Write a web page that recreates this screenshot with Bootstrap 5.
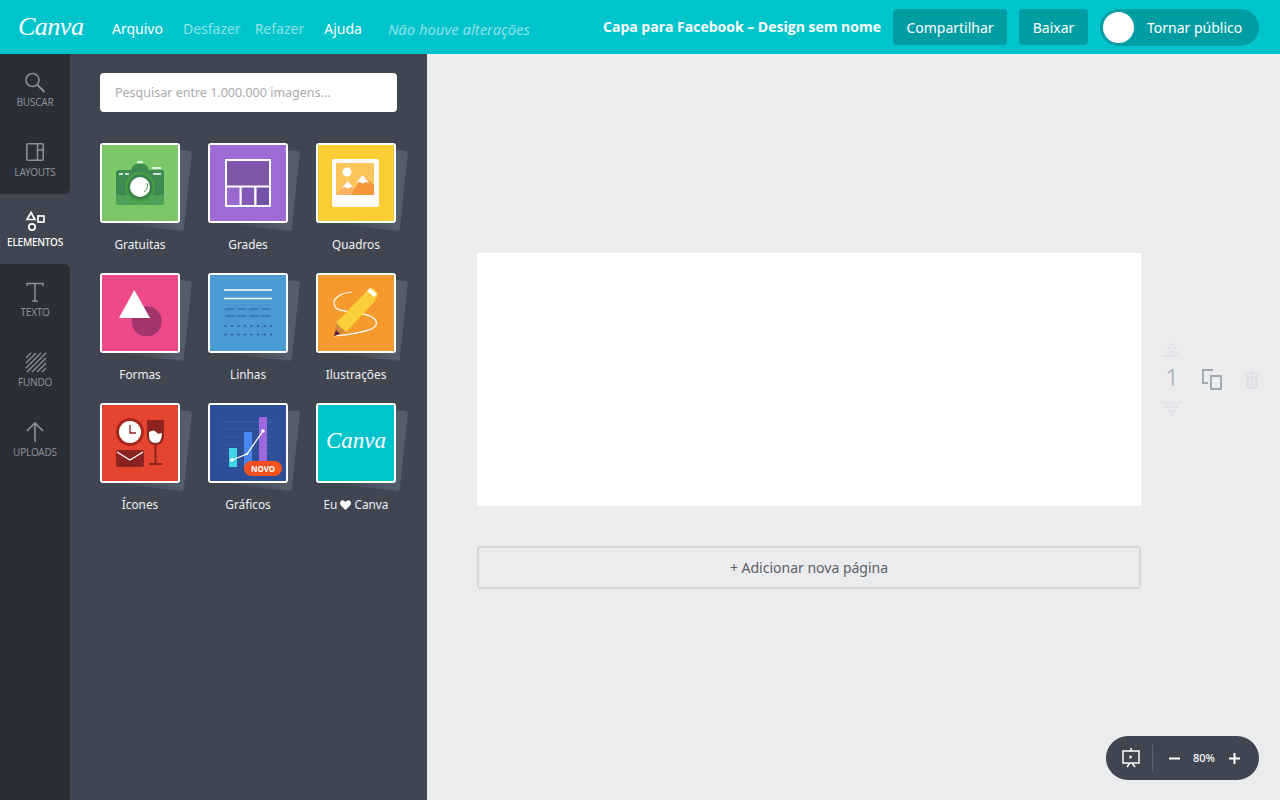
<!DOCTYPE html>
<html lang="pt-BR">
<head>
    <meta charset="UTF-8">
    <meta name="viewport" content="width=device-width, initial-scale=1.0">
    <title>Capa para Facebook - Canva</title>
    <link rel="stylesheet" href="https://cdn.jsdelivr.net/npm/bootstrap@5.3.0/dist/css/bootstrap.min.css">
    <style>
        html, body { height: 100%; overflow: hidden; }
        body { font-family: "Noto Sans", "Open Sans", sans-serif; background: #ebecee; }

        .topbar { height: 54px; background: #00c4cc; color: #fff; }
        .brand { width: 112px; padding-left: 18px; font-family: "Liberation Serif", serif; font-style: italic; font-size: 26px; line-height: 50px; letter-spacing: -.5px; }
        .menu-item { font-size: 14px; line-height: 20px; margin-top: 4px; color: #fff; }
        .menu-off { color: #8fe3e6; margin-left: 20px; }
        .menu-redo { margin-left: 14px; }
        .menu-help { margin-left: 20px; }
        .menu-note { font-style: italic; font-size: 14.8px; color: #8fe3e6; margin-left: 26px; }
        .doc-title { font-family: "Open Sans", sans-serif; font-weight: 700; font-size: 14px; margin: -1px 12px 0 0; }
        .bar-btn { height: 36px; background: #009da3; color: #fff; border: 0; border-radius: 4px; font-size: 14px; line-height: 20px; padding: 1px 0 0; }
        .bar-btn:hover { background: #009da3; color: #fff; }
        .share-btn { width: 114px; }
        .dl-btn { width: 69px; margin: 0 12px; }
        .public-toggle { width: 159px; height: 37px; background: #009da3; border-radius: 19px; padding-left: 3px; font-size: 14px; margin-right: 21px; }
        .toggle-knob { width: 31px; height: 31px; background: #fff; border-radius: 50%; margin-right: 13px; }

        .workspace { height: 746px; }
        .side-rail { width: 70px; background: #3f4652; }
        .rail-group { background: #2a2e36; }
        .rail-top { border-bottom-right-radius: 6px; }
        .rail-rest { border-top-right-radius: 6px; }
        .rail-item { height: 70px; padding-top: 16px; color: #8b8f96; font-size: 10px; line-height: 14px; letter-spacing: -.2px; }
        .rail-item svg { display: block; height: 24px; margin-bottom: 1px; }
        .rail-active { color: #fff; }

        .side-panel { width: 357px; background: #3f4652; padding: 19px 30px 0; }
        .search-box { height: 39px; width: 297px; font-size: 12.5px; border: 0; padding-left: 15px; border-radius: 4px; font-family: "Noto Sans", sans-serif; }
        .search-box::placeholder { color: #aaa; }
        .tile-grid { display: grid; grid-template-columns: repeat(3, 80px); column-gap: 28px; grid-auto-rows: 130px; margin-top: 31px; }
        .tile-cell { color: #f0f1f3; font-size: 11.8px; text-align: center; }
        .tile-frame { position: relative; width: 80px; height: 80px; margin-bottom: 13px; }
        .tile-frame::before { content: ""; position: absolute; left: 8px; top: 4px; width: 80px; height: 80px; border-radius: 3px; background: linear-gradient(45deg, #3f4652 12%, #565d6a 50%); transform: rotate(6deg); }
        .tile-face { position: relative; width: 80px; height: 80px; border: 2px solid #fff; border-radius: 3px; overflow: hidden; }
        .tile-face svg { display: block; width: 76px; height: 76px; }
        .tile-label { white-space: nowrap; margin: 0 -10px; line-height: 17px; }
        .tile-label svg { vertical-align: -1px; }
        .face-teal { background: #00c4cc; }
        .face-logo { font-family: "Liberation Serif", serif; font-style: italic; font-size: 23px; line-height: 72px; color: #fff; }
        .novo-tag { position: absolute; left: 34px; top: 56px; width: 38px; height: 15px; background: #f4511e; border-radius: 8px; color: #fff; font-size: 8px; font-weight: 700; line-height: 15px; }

        .stage { padding: 199px 0 0 50px; }
        .design-page { width: 664px; height: 253px; background: #fff; }
        .page-tools { width: 139px; height: 253px; padding-left: 21px; }
        .num-col { width: 20px; height: 73px; margin-top: -1px; }
        .page-num { font-size: 24px; font-weight: 300; line-height: 30px; margin: 5px 0 10px; text-align: center; color: #a5a8ad; }
        .num-col svg { display: block; }
        .copy-icon { margin: 0 23px 0 20px; }
        .add-page { width: 664px; height: 43px; margin-top: 40px; border: 2px solid #d5d7db; border-radius: 4px; font-size: 14px; color: #5b5f66; background: transparent; }
        .add-page:hover { color: #5b5f66; background: transparent; border-color: #d5d7db; }
        .zoom-pill { position: absolute; right: 21px; bottom: 20px; width: 153px; height: 44px; background: #3f4652; border-radius: 22px; color: #fff; font-size: 11px; font-weight: 500; padding-left: 16px; }
        .zoom-sep { width: 1px; height: 26px; background: #5d636e; margin: 0 16px 0 12px; }
        .zoom-val { margin: 0 14px 0 13px; }
    </style>
</head>
<body>
    <!-- top bar -->
    <div class="topbar d-flex align-items-center">
        <div class="brand">Canva</div>
        <div class="menu-item">Arquivo</div>
        <div class="menu-item menu-off">Desfazer</div>
        <div class="menu-item menu-off menu-redo">Refazer</div>
        <div class="menu-item menu-help">Ajuda</div>
        <div class="menu-item menu-note">Não houve alterações</div>
        <div class="doc-title ms-auto">Capa para Facebook – Design sem nome</div>
        <button class="btn bar-btn share-btn">Compartilhar</button>
        <button class="btn bar-btn dl-btn">Baixar</button>
        <div class="public-toggle d-flex align-items-center">
            <div class="toggle-knob"></div>
            <span>Tornar público</span>
        </div>
    </div>

    <div class="workspace d-flex position-relative">
        <!-- left rail -->
        <div class="side-rail d-flex flex-column">
            <div class="rail-group rail-top">
                <div class="rail-item d-flex flex-column align-items-center">
                    <svg width="24" height="24" viewBox="0 0 24 24" fill="none" stroke="#8b8f96" stroke-width="1.6"><circle cx="9.5" cy="10" r="6.5"/><path d="M14.5 15l7 7" stroke-width="2"/></svg>
                    <span>BUSCAR</span>
                </div>
                <div class="rail-item d-flex flex-column align-items-center">
                    <svg width="24" height="24" viewBox="0 0 24 24" fill="none" stroke="#8b8f96" stroke-width="1.6"><rect x="3.8" y="3.8" width="16.4" height="16.4" rx="1"/><path d="M14.5 4v16M14.5 10h6"/></svg>
                    <span>LAYOUTS</span>
                </div>
            </div>
            <div class="rail-item rail-active d-flex flex-column align-items-center">
                <svg width="24" height="24" viewBox="0 0 24 24" fill="none" stroke="#fff" stroke-width="1.7"><path d="M8 2.5l4 7H4z"/><rect x="15" y="6" width="6" height="6"/><circle cx="9" cy="17" r="3.2"/></svg>
                <span class="fw-medium">ELEMENTOS</span>
            </div>
            <div class="rail-group rail-rest flex-grow-1">
                <div class="rail-item d-flex flex-column align-items-center">
                    <svg width="24" height="24" viewBox="0 0 24 24" fill="none" stroke="#8b8f96" stroke-width="1.5"><path d="M4 6V3.5h16V6M12 3.5V21M9 21h6"/></svg>
                    <span>TEXTO</span>
                </div>
                <div class="rail-item d-flex flex-column align-items-center">
                    <svg width="24" height="24" viewBox="0 0 24 24" fill="none" stroke="#8b8f96" stroke-width="1.4"><path d="M3 8l5-5M3 13l10-10M3 18L18 3M4 22L23 3M9 22L23 8M14 22l9-9M19 22l4-4"/></svg>
                    <span>FUNDO</span>
                </div>
                <div class="rail-item d-flex flex-column align-items-center">
                    <svg width="24" height="24" viewBox="0 0 24 24" fill="none" stroke="#8b8f96" stroke-width="1.6"><path d="M12 22V3M4 11l8-8 8 8"/></svg>
                    <span>UPLOADS</span>
                </div>
            </div>
        </div>

        <!-- elements panel -->
        <div class="side-panel">
            <input class="form-control search-box" type="text" placeholder="Pesquisar entre 1.000.000 imagens...">
            <div class="tile-grid">
                <div class="tile-cell">
                    <div class="tile-frame"><div class="tile-face">
                        <svg viewBox="2 2 76 76">
                            <rect x="2" y="2" width="76" height="76" fill="#7cc768"/>
                            <rect x="16" y="27" width="48" height="35" rx="3" fill="#3d8a52"/>
                            <path d="M16 52h48v7a3 3 0 0 1-3 3H19a3 3 0 0 1-3-3z" fill="#4ea257"/>
                            <path d="M31 32q0-11 6-11h6q6 0 6 11z" fill="#3d8a52"/>
                            <path d="M19 31h4M25 31h4M52 25h9M37 19h6M53 31h8" stroke="#fff" stroke-width="1.3"/>
                            <circle cx="40" cy="44" r="15" fill="#4a9c46"/>
                            <circle cx="40" cy="44" r="12.5" fill="#37804c"/>
                            <circle cx="40" cy="44" r="10" fill="#fff"/>
                            <path d="M47 40a8 8 0 0 1-3 9" fill="none" stroke="#4a9c46" stroke-width="1"/>
                        </svg>
                    </div></div>
                    <div class="tile-label">Gratuitas</div>
                </div>
                <div class="tile-cell">
                    <div class="tile-frame"><div class="tile-face">
                        <svg viewBox="2 2 76 76">
                            <rect x="2" y="2" width="76" height="76" fill="#9d6ad6"/>
                            <rect x="17" y="16" width="46" height="48" rx="1" fill="#fff"/>
                            <rect x="19" y="18" width="42" height="24.5" fill="#7f56a9"/>
                            <rect x="19" y="44.5" width="12.5" height="17.5" fill="#9a69d0"/>
                            <rect x="33.7" y="44.5" width="12.5" height="17.5" fill="#8459b5"/>
                            <rect x="48.5" y="44.5" width="12.5" height="17.5" fill="#7552a8"/>
                        </svg>
                    </div></div>
                    <div class="tile-label">Grades</div>
                </div>
                <div class="tile-cell">
                    <div class="tile-frame"><div class="tile-face">
                        <svg viewBox="2 2 76 76">
                            <rect x="2" y="2" width="76" height="76" fill="#fbcd35"/>
                            <rect x="16" y="16" width="47" height="48" rx="2" fill="#fff"/>
                            <rect x="20" y="20" width="38" height="32" fill="#fcc55a"/>
                            <circle cx="31" cy="29" r="4.5" fill="#fff"/>
                            <path d="M20 52l11.7-14L46 52z" fill="#fdb163"/>
                            <path d="M35 52l11.700-19.500L58 42v10z" fill="#f6953a"/>
                            <path d="M31.700 38l-6 7 3-1 3 1.500 3-1.500 3 1zM46.700 32l-6.500 8 3.200-1 3.300 1.500 3.300-1.500 3.200 1z" fill="#fff"/>
                        </svg>
                    </div></div>
                    <div class="tile-label">Quadros</div>
                </div>
                <div class="tile-cell">
                    <div class="tile-frame"><div class="tile-face">
                        <svg viewBox="2 2 76 76">
                            <rect x="2" y="2" width="76" height="76" fill="#ee4a8b"/>
                            <circle cx="46.7" cy="48.3" r="15" fill="#a3356d"/>
                            <path d="M34.3 17L50 45H19z" fill="#fff"/>
                        </svg>
                    </div></div>
                    <div class="tile-label">Formas</div>
                </div>
                <div class="tile-cell">
                    <div class="tile-frame"><div class="tile-face">
                        <svg viewBox="2 2 76 76">
                            <rect x="2" y="2" width="76" height="76" fill="#4c9ad4"/>
                            <path d="M16 17h48M16 25.5h48" stroke="#fff" stroke-width="1.5"/>
                            <path d="M17 36h46M17 43h46" stroke="#3576a8" stroke-width="1.5" stroke-dasharray="9.500 2.500"/>
                            <path d="M17.5 53h47M17.5 61.5h47" stroke="#2a5a86" stroke-width="2.200" stroke-linecap="round" stroke-dasharray="0 6.500"/>
                        </svg>
                    </div></div>
                    <div class="tile-label">Linhas</div>
                </div>
                <div class="tile-cell">
                    <div class="tile-frame"><div class="tile-face">
                        <svg viewBox="2 2 76 76">
                            <rect x="2" y="2" width="76" height="76" fill="#f69a2e"/>
                            <path d="M36 19C22 20 14 28 20 35c6 6 36 3 40 13 3 8-11 12-42 15" fill="none" stroke="#fff" stroke-width="1.200"/>
                            <path d="M50 19l10 8-30 32-10-9z" fill="#fbcf3a"/>
                            <path d="M52 17q3-3 6-1l2 2q3 3 1 6l-2 2-9-7z" fill="#fbcf3a"/>
                            <path d="M51 18l3-3 7 6-3 3z" fill="#fff"/>
                            <path d="M20 50l10 9-12 4z" fill="#d48a3c"/>
                            <path d="M20 57l4 4-6 2z" fill="#5a2440"/>
                        </svg>
                    </div></div>
                    <div class="tile-label">Ilustrações</div>
                </div>
                <div class="tile-cell">
                    <div class="tile-frame"><div class="tile-face">
                        <svg viewBox="2 2 76 76">
                            <rect x="2" y="2" width="76" height="76" fill="#e5452f"/>
                            <circle cx="30" cy="29" r="14" fill="#a8281f"/>
                            <circle cx="30" cy="29" r="11" fill="#fff"/>
                            <path d="M30 22v8h6" fill="none" stroke="#8a221c" stroke-width="1.300"/>
                            <path d="M47 17h17v16q-1 9-8.500 9T47 33z" fill="#8b2421"/>
                            <path d="M49 29q5-3 7 0t6 1q0 10-6.500 10T49 33z" fill="#fff"/>
                            <path d="M54.500 41h2v19h-2zM49 60h13v2H49z" fill="#8b2421"/>
                            <rect x="16" y="47" width="28" height="17" rx="2" fill="#8b2421"/>
                            <path d="M17 49l13 8 13-8" fill="none" stroke="#fff" stroke-width="1.300"/>
                        </svg>
                    </div></div>
                    <div class="tile-label">Ícones</div>
                </div>
                <div class="tile-cell">
                    <div class="tile-frame"><div class="tile-face">
                        <svg viewBox="2 2 76 76">
                            <rect x="2" y="2" width="76" height="76" fill="#2c4f97"/>
                            <path d="M14 19h54M14 26h54M14 34h54M14 42h54M14 50h54M14 58h54" stroke="#43659f" stroke-width=".8"/>
                            <rect x="21" y="45" width="8" height="19" fill="#3fd5e4"/>
                            <rect x="36" y="29" width="8" height="35" fill="#4a86f0"/>
                            <rect x="51" y="14" width="8" height="48" fill="#a066e0"/>
                            <path d="M24 57l15-6 16-23" fill="none" stroke="#fff" stroke-width="1.300"/>
                            <circle cx="24" cy="57" r="1.800" fill="#fff"/>
                            <circle cx="39" cy="51" r="1.300" fill="#fff"/>
                            <circle cx="55" cy="28" r="1.800" fill="#fff"/>
                        </svg>
                        <div class="novo-tag">NOVO</div>
                    </div></div>
                    <div class="tile-label">Gráficos</div>
                </div>
                <div class="tile-cell">
                    <div class="tile-frame"><div class="tile-face face-teal">
                        <div class="face-logo">Canva</div>
                    </div></div>
                    <div class="tile-label">Eu <svg width="11" height="10" viewBox="0 0 12 11"><path d="M6 11L1 6Q-1 3 1 1t5 1q3-3 5-1t0 5z" fill="#fff"/></svg> Canva</div>
                </div>
            </div>
        </div>

        <!-- canvas -->
        <div class="stage flex-grow-1">
            <div class="d-flex">
                <div class="design-page"></div>
                <div class="page-tools d-flex align-items-center">
                    <div class="num-col">
                        <svg width="20" height="14" viewBox="0 0 20 14" fill="none" stroke="#dcdee1" stroke-width="2.500"><path d="M8 1.500h4M6 5h8M3.500 9h13M1 13h18" stroke-dasharray="2 1.500"/></svg>
                        <div class="page-num">1</div>
                        <svg width="20" height="14" viewBox="0 0 20 14" fill="none" stroke="#dcdee1" stroke-width="2.500"><path d="M1 1h18M3.500 5h13M6 9h8M8 12.500h4" stroke-dasharray="2 1.500"/></svg>
                    </div>
                    <svg class="copy-icon" width="20" height="21" viewBox="0 0 20 21" fill="none" stroke="#a5a8ad" stroke-width="2"><path d="M11 1H1v13h5"/><rect x="9" y="7" width="10" height="13"/></svg>
                    <svg width="14" height="18" viewBox="0 0 14 18" fill="#dfe1e4"><path d="M4 0h6v2h4v2H0V2h4zM1 5h12v13H1zm3 2v9h1.500V7zm4.500 0v9H10V7z" fill-rule="evenodd"/></svg>
                </div>
            </div>
            <button class="btn add-page d-block">+ Adicionar nova página</button>
        </div>

        <div class="zoom-pill d-flex align-items-center">
            <svg width="18" height="20" viewBox="0 0 18 20" fill="none" stroke="#fff" stroke-width="1.500"><rect x="1" y="3" width="16" height="12"/><path d="M9 0v3M5 19l3-4M13 19l-3-4"/><path d="M7.500 7l3 2-3 2z" fill="#fff" stroke="none"/></svg>
            <div class="zoom-sep"></div>
            <svg width="11" height="11" viewBox="0 0 11 11"><path d="M0 5.500h11" stroke="#fff" stroke-width="2"/></svg>
            <span class="zoom-val">80%</span>
            <svg width="11" height="11" viewBox="0 0 11 11"><path d="M0 5.500h11M5.500 0v11" stroke="#fff" stroke-width="2"/></svg>
        </div>
    </div>

    <script src="https://cdn.jsdelivr.net/npm/bootstrap@5.3.0/dist/js/bootstrap.bundle.min.js"></script>
</body>
</html>
